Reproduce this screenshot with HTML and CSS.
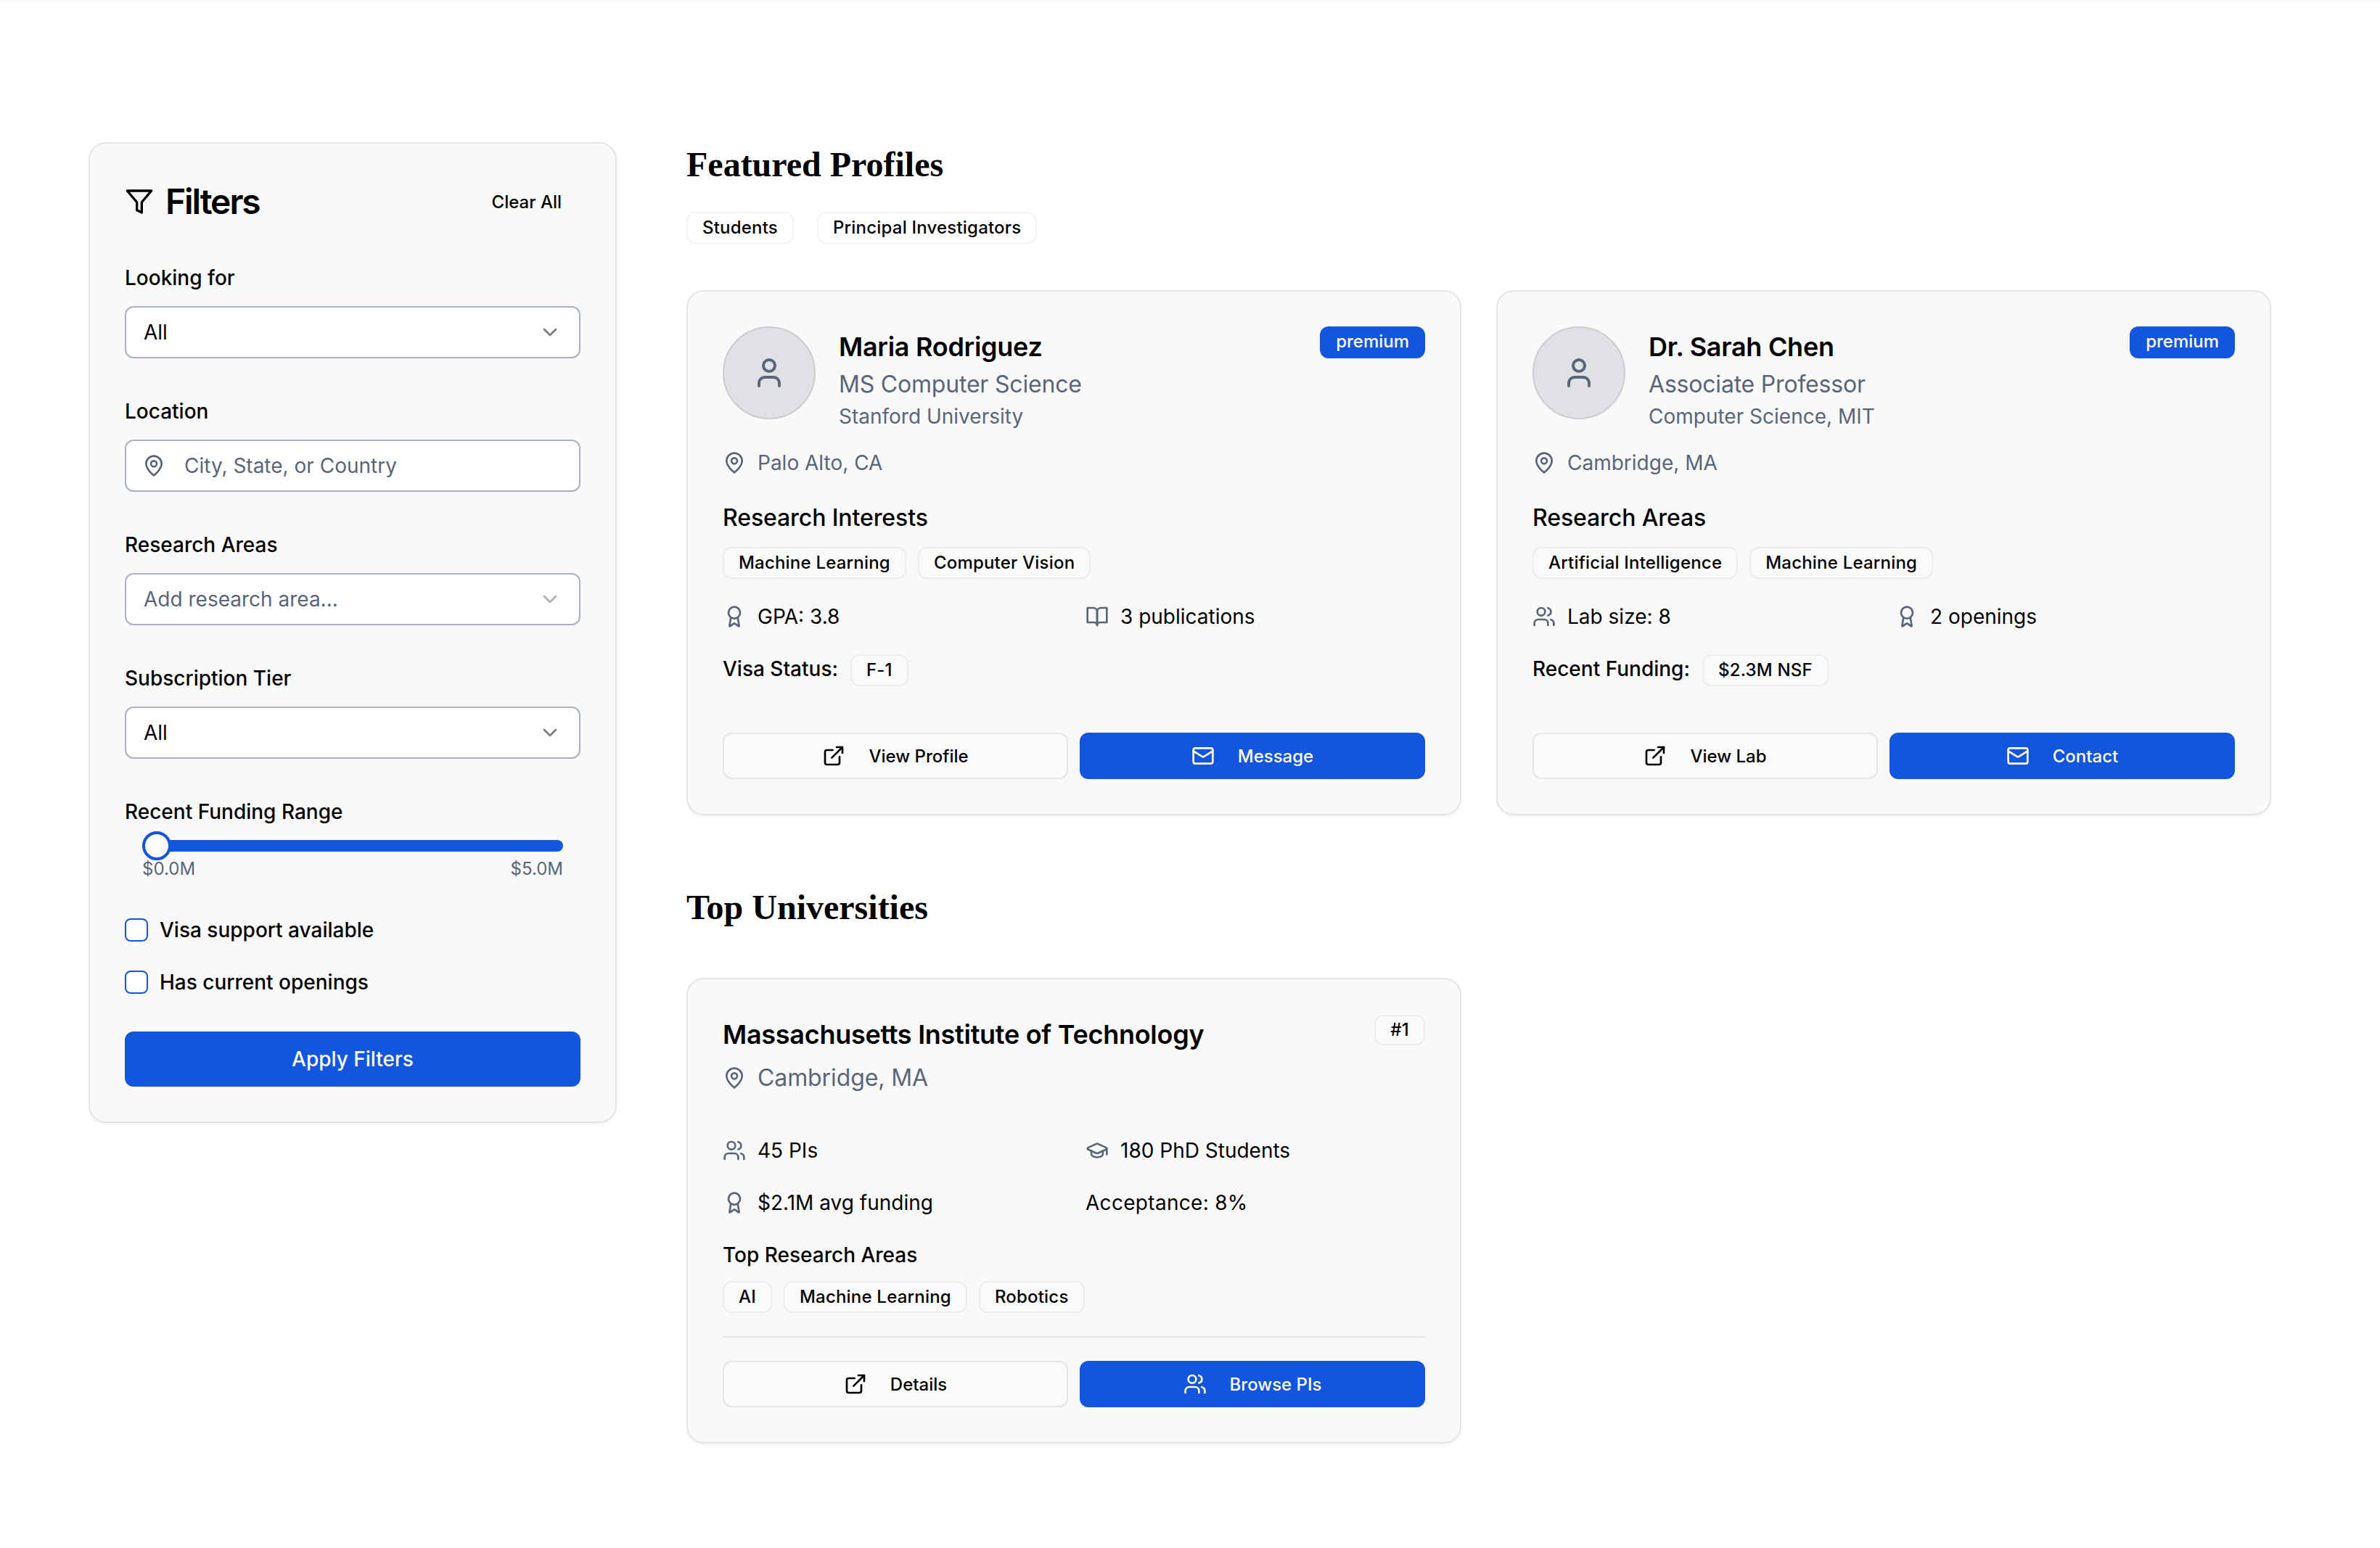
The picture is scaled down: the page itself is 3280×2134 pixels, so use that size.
FILE: index.html

```html
<!DOCTYPE html>
<html lang="en">
<head>
  <meta charset="UTF-8" />
  <title>Research Directory</title>
  <link rel="stylesheet" href="styles.css">
</head>
<body>
  <svg class="sprite" xmlns="http://www.w3.org/2000/svg">
    <symbol id="i-filter" viewBox="0 0 24 24"><polygon points="22 3 2 3 10 12.46 10 19 14 21 14 12.46 22 3"/></symbol>
    <symbol id="i-chevron" viewBox="0 0 24 24"><path d="m6 9 6 6 6-6"/></symbol>
    <symbol id="i-pin" viewBox="0 0 24 24"><path d="M20 10c0 6-8 12-8 12s-8-6-8-12a8 8 0 0 1 16 0Z"/><circle cx="12" cy="10" r="3"/></symbol>
    <symbol id="i-user" viewBox="0 0 24 24"><path d="M19 21v-2a4 4 0 0 0-4-4H9a4 4 0 0 0-4 4v2"/><circle cx="12" cy="7" r="4"/></symbol>
    <symbol id="i-award" viewBox="0 0 24 24"><path d="m15.477 12.89 1.515 8.526a.5.5 0 0 1-.81.47l-3.58-2.687a1 1 0 0 0-1.197 0l-3.586 2.686a.5.5 0 0 1-.81-.469l1.514-8.526"/><circle cx="12" cy="8" r="6"/></symbol>
    <symbol id="i-book" viewBox="0 0 24 24"><path d="M2 3h6a4 4 0 0 1 4 4v14a3 3 0 0 0-3-3H2z"/><path d="M22 3h-6a4 4 0 0 0-4 4v14a3 3 0 0 1 3-3h7z"/></symbol>
    <symbol id="i-link" viewBox="0 0 24 24"><path d="M15 3h6v6"/><path d="M10 14 21 3"/><path d="M18 13v6a2 2 0 0 1-2 2H5a2 2 0 0 1-2-2V8a2 2 0 0 1 2-2h6"/></symbol>
    <symbol id="i-mail" viewBox="0 0 24 24"><rect width="20" height="16" x="2" y="4" rx="2"/><path d="m22 7-8.97 5.7a1.94 1.94 0 0 1-2.06 0L2 7"/></symbol>
    <symbol id="i-users" viewBox="0 0 24 24"><path d="M16 21v-2a4 4 0 0 0-4-4H6a4 4 0 0 0-4 4v2"/><circle cx="9" cy="7" r="4"/><path d="M22 21v-2a4 4 0 0 0-3-3.87"/><path d="M16 3.13a4 4 0 0 1 0 7.75"/></symbol>
    <symbol id="i-cap" viewBox="0 0 24 24"><path d="M21.42 10.922a1 1 0 0 0-.019-1.838L12.83 5.18a2 2 0 0 0-1.66 0L2.6 9.08a1 1 0 0 0 0 1.832l8.57 3.908a2 2 0 0 0 1.66 0z"/><path d="M22 10v6"/><path d="M6 12.5V16a6 3 0 0 0 12 0v-3.5"/></symbol>
  </svg>

  <div class="page">
    <aside class="filters">
      <div class="filters-head">
        <h2 class="filters-title"><svg class="icon icon-lg"><use href="#i-filter"/></svg>Filters</h2>
        <button class="clear-btn">Clear All</button>
      </div>

      <div class="field">
        <label class="field-label">Looking for</label>
        <div class="control"><span>All</span><svg class="icon chevron"><use href="#i-chevron"/></svg></div>
      </div>
      <div class="field">
        <label class="field-label">Location</label>
        <div class="control control-icon">
          <svg class="icon muted"><use href="#i-pin"/></svg>
          <span class="placeholder">City, State, or Country</span>
        </div>
      </div>
      <div class="field">
        <label class="field-label">Research Areas</label>
        <div class="control"><span class="placeholder">Add research area...</span><svg class="icon chevron chevron-light"><use href="#i-chevron"/></svg></div>
      </div>
      <div class="field">
        <label class="field-label">Subscription Tier</label>
        <div class="control"><span>All</span><svg class="icon chevron"><use href="#i-chevron"/></svg></div>
      </div>

      <label class="field-label">Recent Funding Range</label>
      <div class="slider">
        <div class="slider-track"><span class="slider-thumb"></span></div>
        <div class="slider-labels"><span>$0.0M</span><span>$5.0M</span></div>
      </div>

      <div class="check-row"><span class="check"></span>Visa support available</div>
      <div class="check-row"><span class="check"></span>Has current openings</div>

      <button class="apply-btn">Apply Filters</button>
    </aside>

    <main class="content">
      <h1 class="section-title">Featured Profiles</h1>
      <div class="tabs">
        <span class="tab">Students</span>
        <span class="tab">Principal Investigators</span>
      </div>

      <div class="card-grid">
        <article class="card">
          <div class="profile-head">
            <div class="avatar"><svg class="icon icon-avatar"><use href="#i-user"/></svg></div>
            <div class="profile-info">
              <h3 class="card-name">Maria Rodriguez</h3>
              <p class="role">MS Computer Science</p>
              <p class="org">Stanford University</p>
            </div>
            <span class="badge-premium">premium</span>
          </div>
          <div class="stat muted-text location"><svg class="icon muted"><use href="#i-pin"/></svg>Palo Alto, CA</div>
          <h4 class="sub-title">Research Interests</h4>
          <div class="pills">
            <span class="pill">Machine Learning</span>
            <span class="pill">Computer Vision</span>
          </div>
          <div class="stats">
            <div class="stat"><svg class="icon muted"><use href="#i-award"/></svg>GPA: 3.8</div>
            <div class="stat"><svg class="icon muted"><use href="#i-book"/></svg>3 publications</div>
          </div>
          <div class="inline-row">Visa Status: <span class="pill">F-1</span></div>
          <div class="actions actions-profile">
            <button class="btn"><svg class="icon"><use href="#i-link"/></svg>View Profile</button>
            <button class="btn btn-primary"><svg class="icon"><use href="#i-mail"/></svg>Message</button>
          </div>
        </article>

        <article class="card">
          <div class="profile-head">
            <div class="avatar"><svg class="icon icon-avatar"><use href="#i-user"/></svg></div>
            <div class="profile-info">
              <h3 class="card-name">Dr. Sarah Chen</h3>
              <p class="role">Associate Professor</p>
              <p class="org">Computer Science, MIT</p>
            </div>
            <span class="badge-premium">premium</span>
          </div>
          <div class="stat muted-text location"><svg class="icon muted"><use href="#i-pin"/></svg>Cambridge, MA</div>
          <h4 class="sub-title">Research Areas</h4>
          <div class="pills">
            <span class="pill">Artificial Intelligence</span>
            <span class="pill">Machine Learning</span>
          </div>
          <div class="stats">
            <div class="stat"><svg class="icon muted"><use href="#i-users"/></svg>Lab size: 8</div>
            <div class="stat"><svg class="icon muted"><use href="#i-award"/></svg>2 openings</div>
          </div>
          <div class="inline-row">Recent Funding: <span class="pill">$2.3M NSF</span></div>
          <div class="actions actions-profile">
            <button class="btn"><svg class="icon"><use href="#i-link"/></svg>View Lab</button>
            <button class="btn btn-primary"><svg class="icon"><use href="#i-mail"/></svg>Contact</button>
          </div>
        </article>
      </div>

      <h1 class="section-title section-second">Top Universities</h1>

      <div class="card-grid">
        <article class="card">
          <div class="uni-head">
            <h3 class="card-name">Massachusetts Institute of Technology</h3>
            <span class="pill rank">#1</span>
          </div>
          <div class="uni-location muted-text"><svg class="icon muted"><use href="#i-pin"/></svg>Cambridge, MA</div>
          <div class="stats uni-stats">
            <div class="stat"><svg class="icon muted"><use href="#i-users"/></svg>45 PIs</div>
            <div class="stat"><svg class="icon muted"><use href="#i-cap"/></svg>180 PhD Students</div>
            <div class="stat"><svg class="icon muted"><use href="#i-award"/></svg>$2.1M avg funding</div>
            <div class="stat stat-plain">Acceptance: 8%</div>
          </div>
          <h4 class="small-title">Top Research Areas</h4>
          <div class="pills">
            <span class="pill">AI</span>
            <span class="pill">Machine Learning</span>
            <span class="pill">Robotics</span>
          </div>
          <div class="actions actions-divided">
            <button class="btn"><svg class="icon"><use href="#i-link"/></svg>Details</button>
            <button class="btn btn-primary"><svg class="icon"><use href="#i-users"/></svg>Browse PIs</button>
          </div>
        </article>
      </div>
    </main>
  </div>
</body>
</html>
```

FILE: styles.css

```css
* {
  box-sizing: border-box;
}
body {
  margin: 0;
  background: #fff;
  color: #000;
  font-family: Inter, "Liberation Sans", sans-serif;
  font-size: 28px;
  line-height: 40px;
}
h1, h2, h3, h4, p {
  margin: 0;
}
button {
  font-family: inherit;
  cursor: pointer;
}
.sprite {
  display: none;
}
.icon {
  width: 32px;
  height: 32px;
  flex: none;
  fill: none;
  stroke: currentColor;
  stroke-width: 2;
  stroke-linecap: round;
  stroke-linejoin: round;
}
.icon-lg {
  width: 40px;
  height: 40px;
}
.muted {
  color: #5b6579;
}

.page {
  display: flex;
  gap: 96px;
  padding: 192px 150px 100px 122px;
  border-top: 4px solid #fafafa;
}

/* filters */
.filters {
  width: 728px;
  flex: none;
  align-self: flex-start;
  padding: 48px;
  background: #f9f9f9;
  border: 2px solid #e5e5e5;
  border-radius: 24px;
  box-shadow: 0 2px 4px rgba(0,0,0,0.05);
}
.filters-head {
  display: flex;
  justify-content: space-between;
  align-items: center;
  height: 64px;
  margin-bottom: 52px;
}
.filters-title {
  display: flex;
  align-items: center;
  gap: 16px;
  font-size: 48px;
  line-height: 64px;
  font-weight: 600;
  letter-spacing: -2.1px;
}
.clear-btn {
  padding: 0 26px 0 0;
  border: none;
  background: none;
  color: #000;
  font-size: 24px;
  font-weight: 500;
}
.field {
  margin-bottom: 52px;
}
.field-label {
  display: block;
  font-weight: 500;
  height: 40px;
  line-height: 42px;
}
.field .field-label {
  margin-bottom: 20px;
}
.control {
  display: flex;
  align-items: center;
  justify-content: space-between;
  height: 72px;
  padding: 0 24px;
  background: #fff;
  border: 2px solid #a9b1c2;
  border-radius: 12px;
}
.control-icon {
  justify-content: flex-start;
  gap: 26px;
  padding-left: 22px;
}
.placeholder {
  color: #5b6579;
}
.chevron {
  color: #000;
  opacity: 0.5;
}
.chevron-light {
  opacity: 0.3;
}

.slider {
  margin: 20px 24px 0;
}
.slider-track {
  position: relative;
  height: 16px;
  background: #1355de;
  border-radius: 8px;
}
.slider-thumb {
  position: absolute;
  left: 0;
  top: -12px;
  width: 40px;
  height: 40px;
  background: #fff;
  border: 4px solid #1355de;
  border-radius: 50%;
}
.slider-labels {
  display: flex;
  justify-content: space-between;
  margin-top: 8px;
  font-size: 24px;
  line-height: 32px;
  color: #5b6579;
}
.check-row {
  display: flex;
  align-items: center;
  gap: 16px;
  height: 40px;
  margin-top: 32px;
  font-weight: 500;
}
.slider + .check-row {
  margin-top: 48px;
}
.check {
  width: 32px;
  height: 32px;
  flex: none;
  background: #fff;
  border: 2px solid #1355de;
  border-radius: 8px;
}
.apply-btn {
  display: block;
  width: 100%;
  height: 76px;
  margin-top: 48px;
  background: #1355de;
  border: none;
  border-radius: 12px;
  color: #fff;
  font-size: 28px;
  font-weight: 500;
}

/* main column */
.content {
  flex: 1;
  min-width: 0;
}
.section-title {
  font-family: "Liberation Serif", serif;
  font-size: 48px;
  line-height: 62px;
  font-weight: 700;
}
.section-second {
  margin-top: 96px;
  margin-bottom: 66px;
}
.tabs {
  display: flex;
  gap: 32px;
  margin: 34px 0 64px;
}
.tab {
  height: 44px;
  padding: 0 20px;
  background: #fff;
  border: 2px solid #f3f3f3;
  border-radius: 12px;
  font-size: 24px;
  line-height: 40px;
  font-weight: 500;
  letter-spacing: 0.2px;
}
.card-grid {
  display: grid;
  grid-template-columns: 1fr 1fr;
  gap: 48px;
}
.card {
  padding: 48px;
  background: #f9f9f9;
  border: 2px solid #e5e5e5;
  border-radius: 24px;
  box-shadow: 0 2px 4px rgba(0,0,0,0.05);
}
.profile-head {
  display: flex;
  align-items: flex-start;
  gap: 32px;
}
.avatar {
  display: flex;
  align-items: center;
  justify-content: center;
  width: 128px;
  height: 128px;
  flex: none;
  background: #e0e1e4;
  border: 2px solid #cbcccf;
  border-radius: 50%;
  color: #5b6579;
}
.icon-avatar {
  width: 48px;
  height: 48px;
}
.profile-info {
  flex: 1;
}
.card-name {
  font-size: 36px;
  line-height: 56px;
  font-weight: 600;
  letter-spacing: -0.28px;
}
.role {
  font-size: 32px;
  line-height: 48px;
  color: #5b6579;
  letter-spacing: -0.2px;
}
.org {
  color: #5b6579;
}
.badge-premium {
  height: 44px;
  padding: 0 22px;
  background: #1355de;
  border-radius: 12px;
  color: #fff;
  font-size: 24px;
  line-height: 42px;
  font-weight: 500;
}
.stat {
  display: flex;
  align-items: center;
  gap: 16px;
}
.stat-plain {
  letter-spacing: 0.3px;
}
.muted-text {
  color: #5b6579;
}
.location {
  margin-top: 24px;
}
.sub-title {
  margin: 32px 0 16px;
  font-size: 32px;
  line-height: 48px;
  font-weight: 500;
  letter-spacing: -0.1px;
}
.pills {
  display: flex;
  gap: 16px;
}
.pill {
  display: inline-block;
  height: 44px;
  padding: 0 20px;
  background: #fafafa;
  border: 2px solid #ededed;
  border-radius: 12px;
  font-size: 24px;
  line-height: 40px;
  font-weight: 500;
  letter-spacing: 0.2px;
}
.stats {
  display: grid;
  grid-template-columns: 1fr 1fr;
  gap: 32px;
  margin-top: 32px;
}
.inline-row {
  display: flex;
  align-items: flex-start;
  gap: 17px;
  margin-top: 32px;
  font-weight: 500;
}
.actions {
  display: grid;
  grid-template-columns: 1fr 1fr;
  gap: 16px;
}
.actions-profile {
  margin-top: 64px;
}
.actions-divided {
  margin-top: 32px;
  padding-top: 32px;
  border-top: 2px solid #e5e5e5;
}
.btn {
  display: flex;
  align-items: center;
  justify-content: center;
  gap: 32px;
  height: 64px;
  background: #fafafa;
  border: 2px solid #e5e5e5;
  border-radius: 12px;
  color: #000;
  font-size: 24px;
  font-weight: 500;
}
.btn-primary {
  background: #1355de;
  border-color: #1355de;
  color: #fff;
}

/* university card */
.uni-head {
  display: flex;
  justify-content: space-between;
  align-items: flex-start;
}
.rank {
  margin-top: 1px;
  height: 42px;
  padding: 0 20px;
  line-height: 38px;
}
.uni-location {
  display: flex;
  align-items: center;
  gap: 16px;
  margin-top: 8px;
  font-size: 32px;
  line-height: 48px;
  letter-spacing: -0.1px;
}
.uni-stats {
  margin-top: 56px;
}
.small-title {
  margin: 32px 0 16px;
  font-size: 28px;
  line-height: 40px;
  font-weight: 500;
}
```
